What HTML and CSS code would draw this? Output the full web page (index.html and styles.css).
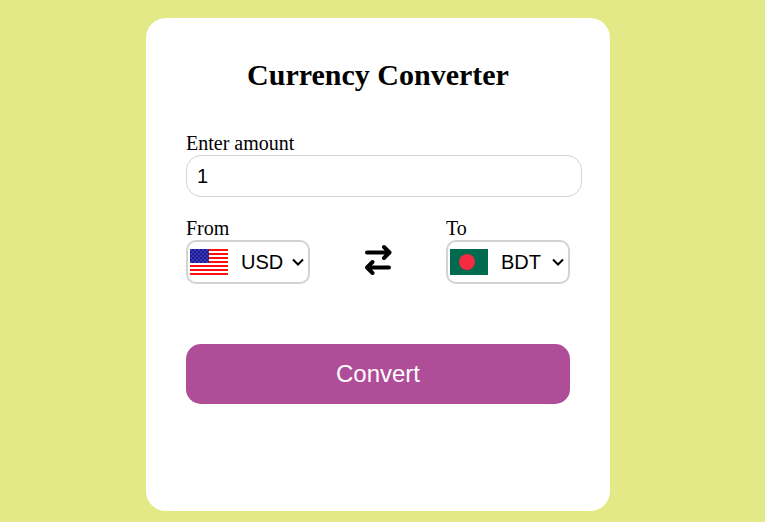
FILE: index.html
```html
<!DOCTYPE html>
<html lang="en">
<head>
<meta charset="utf-8">
<meta name="viewport" content="width=device-width, initial-scale=1">
<title>Currency Converter</title>
<link rel="stylesheet" href="styles.css">
</head>
<body>
<main class="container">
  <h1>Currency Converter</h1>
  <form>
    <div class="amount">
      <label for="amount">Enter amount</label>
      <input id="amount" type="text" value="1">
    </div>
    <div class="dropdown">
      <div class="side">
        <label for="from">From</label>
        <div class="select-box">
          <svg class="flag" viewBox="0 0 38 26" aria-hidden="true">
            <defs>
              <pattern id="stars" width="4" height="4" patternUnits="userSpaceOnUse">
                <rect width="4" height="4" fill="#1a1a9c"/>
                <circle cx="1" cy="1" r=".55" fill="#a8a8dc"/>
                <circle cx="3" cy="3" r=".55" fill="#a8a8dc"/>
              </pattern>
            </defs>
            <rect width="38" height="26" fill="#fff"/>
            <path d="M0 1H38M0 5H38M0 9H38M0 13H38M0 17H38M0 21H38M0 25H38" stroke="#ff1010" stroke-width="2"/>
            <rect width="19" height="14" fill="url(#stars)"/>
          </svg>
          <select id="from"><option>USD</option></select>
          <svg class="chevron" viewBox="0 0 12 8" aria-hidden="true"><path d="M1 1.500L6 6.500L11 1.500"/></svg>
        </div>
      </div>
      <button class="swap" type="button" aria-label="Swap currencies">
        <svg viewBox="0 0 28 32" aria-hidden="true">
          <path d="M3 8.500H25M20 3L25.500 8.500L20 14M25 23.500H3M8.500 18L3 23.500L8.500 29"/>
        </svg>
      </button>
      <div class="side">
        <label for="to">To</label>
        <div class="select-box">
          <svg class="flag" viewBox="0 0 38 26" aria-hidden="true">
            <rect width="38" height="26" fill="#006a4e"/>
            <circle cx="17" cy="13" r="8" fill="#f42a41"/>
          </svg>
          <select id="to"><option>BDT</option></select>
          <svg class="chevron" viewBox="0 0 12 8" aria-hidden="true"><path d="M1 1.500L6 6.500L11 1.500"/></svg>
        </div>
      </div>
    </div>
    <button class="convert" type="submit">Convert</button>
  </form>
</main>
</body>
</html>
```
FILE: styles.css
```css
* {
  box-sizing: border-box;
}

body {
  margin: 0;
  padding: 18px 9px 11px 0;
  display: flex;
  justify-content: center;
  background: #e3e986;
  font-family: "Liberation Serif", "Times New Roman", serif;
  font-size: 20px;
  line-height: 23px;
  color: #000;
}

.container {
  width: 100%;
  max-width: 464px;
  padding: 40px 40px 107px;
  border-radius: 20px;
  background: #fff;
}

h1 {
  margin: 0 0 40px;
  font-size: 30px;
  line-height: 34px;
  text-align: center;
}

label {
  display: block;
}

input,
select,
button {
  font-family: "Liberation Sans", Arial, sans-serif;
  font-size: 20px;
  color: #000;
}

.amount {
  margin-bottom: 20px;
}

.amount input {
  display: block;
  width: calc(100% + 12px);
  height: 42px;
  padding: 0 10px;
  border: 1px solid lightgray;
  border-radius: 15px;
}

.dropdown {
  display: flex;
  justify-content: space-between;
}

.select-box {
  position: relative;
  display: flex;
  align-items: center;
  width: 124px;
  height: 44px;
  padding: 0 2px;
  border: 2px solid lightgray;
  border-radius: 10px;
}

.flag {
  flex: none;
  width: 38px;
  height: 26px;
}

select {
  appearance: none;
  flex: 1;
  min-width: 0;
  height: 36px;
  padding: 0 0 0 13px;
  border: 0;
  background: transparent;
}

.chevron {
  position: absolute;
  right: 4px;
  top: 16px;
  width: 12px;
  height: 8px;
  fill: none;
  stroke: #000;
  stroke-width: 2;
  pointer-events: none;
}

.swap {
  align-self: flex-end;
  height: 44px;
  padding: 0;
  border: 0;
  background: none;
}

.swap svg {
  display: block;
  width: 28px;
  height: 32px;
  margin-bottom: 4px;
  fill: none;
  stroke: #000;
  stroke-width: 4;
  stroke-linecap: round;
  stroke-linejoin: round;
}

.convert {
  display: block;
  width: 100%;
  height: 60px;
  margin-top: 60px;
  border: 0;
  border-radius: 15px;
  background: #af4d98;
  color: #fff;
  font-size: 24px;
}
```
